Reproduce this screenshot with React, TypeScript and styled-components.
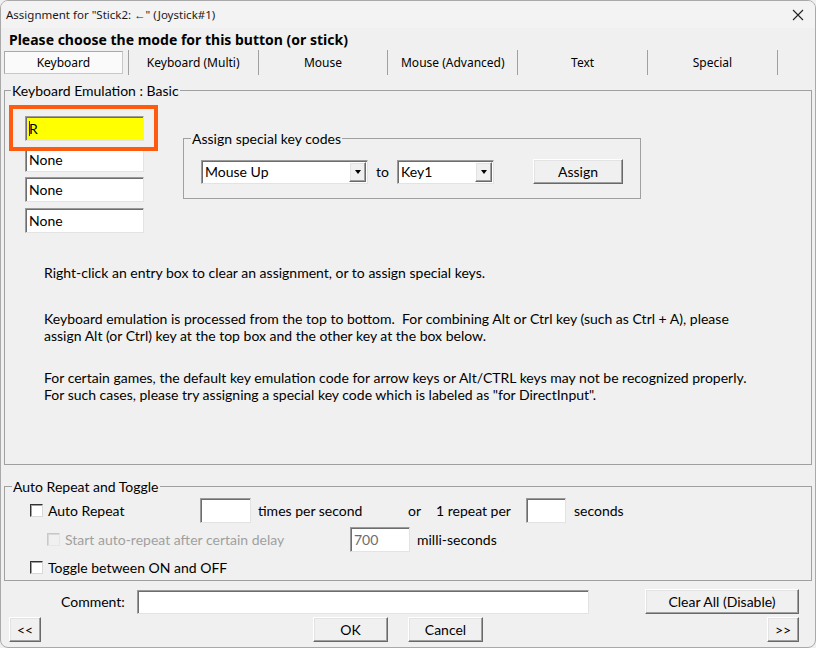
import React from "react";
import styled, { createGlobalStyle, css } from "styled-components";

const GlobalStyle = createGlobalStyle`
  html, body {
    margin: 0;
    padding: 0;
    background: #f0f0f0;
  }
  * {
    box-sizing: border-box;
  }
`;

const UI_FONT = `"Noto Sans", "Open Sans", Arial, sans-serif`;
const DLG_FONT = `Lato, "Liberation Sans", Arial, sans-serif`;

const Window = styled.div`
  width: 816px;
  height: 648px;
  display: flex;
  flex-direction: column;
  background: #f0f0f0;
  border: 1px solid #a9a9a9;
  border-radius: 8px;
  overflow: hidden;
  font-family: ${DLG_FONT};
  color: #000;
`;

const TitleBar = styled.div`
  height: 27px;
  display: flex;
  align-items: center;
  justify-content: space-between;
  padding: 0 8px 0 5px;
  background: #f3f3f3;
  font-family: ${UI_FONT};
  font-size: 11.5px;
  color: #1a1a1a;
`;

const CloseIcon = styled.svg`
  width: 12px;
  height: 12px;
  margin-right: 3px;
`;

const Heading = styled.div`
  height: 22px;
  line-height: 23px;
  padding-left: 8px;
  font-family: ${UI_FONT};
  font-weight: 700;
  font-size: 14px;
  color: #000;
`;

const TabBar = styled.div`
  height: 25px;
  display: flex;
  margin-left: -2px;
`;

const Tab = styled.div`
  width: 129.8px;
  flex: none;
  display: flex;
  border-right: 1px solid #a0a0a0;
`;

const TabFace = styled.div<{ $active?: boolean }>`
  flex: 1;
  display: flex;
  align-items: center;
  justify-content: center;
  margin: ${(p) => (p.$active ? "1px 5px 1px 5px" : "0")};
  font-family: ${UI_FONT};
  font-size: 12px;
  color: #000;
  ${(p) =>
    p.$active &&
    css`
      background: #fafafa;
      border: 1px solid #a8a8a8;
      border-right-color: #c8c8c8;
      border-bottom-color: #c8c8c8;
    `}
`;

const Body = styled.div`
  padding: 0 3px;
  display: flex;
  flex-direction: column;
`;

const Group = styled.fieldset<{ $top: number }>`
  margin: ${(p) => p.$top}px 0 0 0;
  padding: 0;
  border: 1px solid #a0a0a0;
  min-width: 0;
`;

const Legend = styled.legend<{ $left?: number }>`
  margin-left: ${(p) => p.$left ?? 6}px;
  padding: 0 1px;
  font-size: 14px;
  line-height: 15px;
  color: #000;
`;

const EmulationContent = styled.div`
  height: 366px;
  padding: 18px 0 0 20px;
`;

const TopRow = styled.div`
  display: flex;
  align-items: flex-start;
`;

const KeyColumn = styled.div`
  position: relative;
  width: 119px;
  display: flex;
  flex-direction: column;
  gap: 5.5px;
`;

const Highlight = styled.div`
  position: absolute;
  left: -16px;
  top: -11px;
  width: 149px;
  height: 46px;
  border: 4px solid #ff5b0f;
  pointer-events: none;
`;

const sunken = css`
  background: #fff;
  border-top: 1px solid #9a9a9a;
  border-left: 1px solid #9a9a9a;
  border-right: 1px solid #e3e3e3;
  border-bottom: 1px solid #e3e3e3;
  box-shadow: inset 1px 1px 0 #6d6d6d;
`;

const Field = styled.div<{ $w?: number; $h?: number; $bg?: string; $muted?: boolean }>`
  ${sunken}
  width: ${(p) => (p.$w ? `${p.$w}px` : "100%")};
  height: ${(p) => p.$h ?? 25}px;
  flex: none;
  display: flex;
  align-items: center;
  padding-left: 3px;
  font-size: 14px;
  color: ${(p) => (p.$muted ? "#6d6d6d" : "#000")};
  ${(p) => p.$bg && `background: ${p.$bg};`}
`;

const Caret = styled.span`
  display: inline-block;
  width: 1px;
  height: 15px;
  background: #1b1bb0;
  margin-right: -1px;
`;

const SpecialGroup = styled(Group)`
  width: 458px;
  margin-left: 39px;
  flex: none;
`;

const SpecialRow = styled.div`
  display: flex;
  align-items: center;
  padding: 13px 0 14px 17px;
`;

const Select = styled.div<{ $w: number }>`
  ${sunken}
  width: ${(p) => p.$w}px;
  height: 24px;
  flex: none;
  display: flex;
  align-items: stretch;
  font-size: 14px;
`;

const SelectValue = styled.div`
  flex: 1;
  display: flex;
  align-items: center;
  padding-left: 3px;
`;

const raised = css`
  background: #f0f0f0;
  border-top: 1px solid #fff;
  border-left: 1px solid #fff;
  border-right: 1px solid #696969;
  border-bottom: 1px solid #696969;
  box-shadow: inset -1px -1px 0 #a0a0a0, inset 1px 1px 0 #e3e3e3;
`;

const ArrowButton = styled.div`
  ${raised}
  width: 17px;
  margin: 1px 1px 1px 0;
  display: flex;
  align-items: center;
  justify-content: center;
`;

const Arrow = styled.span`
  width: 0;
  height: 0;
  border-left: 3.5px solid transparent;
  border-right: 3.5px solid transparent;
  border-top: 4px solid #000;
`;

const Word = styled.span<{ $ml?: number; $w?: number; $muted?: boolean }>`
  flex: none;
  margin-left: ${(p) => p.$ml ?? 0}px;
  ${(p) => p.$w && `width: ${p.$w}px;`}
  font-size: 14px;
  white-space: nowrap;
  color: ${(p) => (p.$muted ? "#a0a0a0" : "#000")};
`;

const Button = styled.button<{ $w: number; $ml?: number; $h?: number }>`
  ${raised}
  width: ${(p) => p.$w}px;
  height: ${(p) => p.$h ?? 25}px;
  margin-left: ${(p) => p.$ml ?? 0}px;
  flex: none;
  padding: 0;
  font-family: ${DLG_FONT};
  font-size: 14px;
  color: #000;
`;

const Notes = styled.div`
  margin-left: 19px;
  margin-top: 31.5px;
  font-size: 14px;
  line-height: 17.5px;
  color: #000;
`;

const Note = styled.p<{ $mt: number }>`
  margin: ${(p) => p.$mt}px 0 0 0;
`;

const RepeatContent = styled.div`
  height: 86px;
  padding: 4px 0 0 0;
  display: flex;
  flex-direction: column;
`;

const OptionRow = styled.div<{ $indent: number; $h: number; $mt?: number }>`
  display: flex;
  align-items: center;
  height: ${(p) => p.$h}px;
  margin-top: ${(p) => p.$mt ?? 0}px;
  padding-left: ${(p) => p.$indent}px;
`;

const CheckItem = styled.label<{ $w?: number; $disabled?: boolean }>`
  display: flex;
  align-items: center;
  flex: none;
  ${(p) => p.$w && `width: ${p.$w}px;`}
  font-size: 14px;
  color: ${(p) => (p.$disabled ? "#a0a0a0" : "#000")};
`;

const Box = styled.span<{ $disabled?: boolean }>`
  width: 13px;
  height: 13px;
  flex: none;
  margin-right: 5px;
  background: ${(p) => (p.$disabled ? "#f0f0f0" : "#fff")};
  border: 1px solid ${(p) => (p.$disabled ? "#c8c8c8" : "#333")};
  border-right-color: ${(p) => (p.$disabled ? "#e6e6e6" : "#d8d8d8")};
  border-bottom-color: ${(p) => (p.$disabled ? "#e6e6e6" : "#d8d8d8")};
  box-shadow: inset 1px 1px 0 ${(p) => (p.$disabled ? "#d8d8d8" : "#a0a0a0")};
`;

const CommentRow = styled.div`
  display: flex;
  align-items: center;
  height: 27px;
  margin-top: 7px;
  padding-left: 60px;
`;

const NavRow = styled.div`
  display: flex;
  align-items: center;
  height: 25px;
  margin-top: 2px;
  padding-left: 5px;
`;

const tabs = [
  "Keyboard",
  "Keyboard (Multi)",
  "Mouse",
  "Mouse (Advanced)",
  "Text",
  "Special",
];

export default function App() {
  return (
    <>
      <GlobalStyle />
      <Window>
        <TitleBar>
          <span>Assignment for "Stick2: ←" (Joystick#1)</span>
          <CloseIcon viewBox="0 0 12 12">
            <path d="M1 1 L11 11 M11 1 L1 11" stroke="#222" strokeWidth="1.1" />
          </CloseIcon>
        </TitleBar>
        <Heading>Please choose the mode for this button (or stick)</Heading>
        <TabBar>
          {tabs.map((t, i) => (
            <Tab key={t}>
              <TabFace $active={i === 0}>{t}</TabFace>
            </Tab>
          ))}
        </TabBar>
        <Body>
          <Group $top={8}>
            <Legend>Keyboard Emulation : Basic</Legend>
            <EmulationContent>
              <TopRow>
                <KeyColumn>
                  <Field $bg="#ffff00">
                    <Caret />R
                  </Field>
                  <Field>None</Field>
                  <Field>None</Field>
                  <Field>None</Field>
                  <Highlight />
                </KeyColumn>
                <SpecialGroup $top={15}>
                  <Legend $left={7}>Assign special key codes</Legend>
                  <SpecialRow>
                    <Select $w={167}>
                      <SelectValue>Mouse Up</SelectValue>
                      <ArrowButton>
                        <Arrow />
                      </ArrowButton>
                    </Select>
                    <Word $ml={8} $w={21}>
                      to
                    </Word>
                    <Select $w={97}>
                      <SelectValue>Key1</SelectValue>
                      <ArrowButton>
                        <Arrow />
                      </ArrowButton>
                    </Select>
                    <Button $w={90} $ml={39}>
                      Assign
                    </Button>
                  </SpecialRow>
                </SpecialGroup>
              </TopRow>
              <Notes>
                <Note $mt={0}>
                  Right-click an entry box to clear an assignment, or to assign special keys.
                </Note>
                <Note $mt={28}>
                  Keyboard emulation is processed from the top to bottom.&nbsp; For combining Alt
                  or Ctrl key (such as Ctrl + A), please
                  <br />
                  assign Alt (or Ctrl) key at the top box and the other key at the box below.
                </Note>
                <Note $mt={24}>
                  For certain games, the default key emulation code for arrow keys or Alt/CTRL
                  keys may not be recognized properly.
                  <br />
                  For such cases, please try assigning a special key code which is labeled as
                  "for DirectInput".
                </Note>
              </Notes>
            </EmulationContent>
          </Group>

          <Group $top={14}>
            <Legend $left={7}>Auto Repeat and Toggle</Legend>
            <RepeatContent>
              <OptionRow $indent={25} $h={25}>
                <CheckItem $w={170}>
                  <Box />
                  Auto Repeat
                </CheckItem>
                <Field $w={51} />
                <Word $ml={7} $w={150}>
                  times per second
                </Word>
                <Word $w={28}>or</Word>
                <Word $w={90}>1 repeat per</Word>
                <Field $w={40} />
                <Word $ml={8}>seconds</Word>
              </OptionRow>
              <OptionRow $indent={42} $h={25} $mt={4}>
                <CheckItem $w={303} $disabled>
                  <Box $disabled />
                  Start auto-repeat after certain delay
                </CheckItem>
                <Field $w={60} $muted>
                  700
                </Field>
                <Word $ml={7}>milli-seconds</Word>
              </OptionRow>
              <OptionRow $indent={25} $h={18} $mt={6}>
                <CheckItem>
                  <Box />
                  Toggle between ON and OFF
                </CheckItem>
              </OptionRow>
            </RepeatContent>
          </Group>
        </Body>

        <CommentRow>
          <Word $w={76}>Comment:</Word>
          <Field $w={452} $h={24} />
          <Button $w={154} $ml={56}>
            Clear All (Disable)
          </Button>
        </CommentRow>
        <NavRow>
          <Button $w={32} $ml={3}>
            &lt;&lt;
          </Button>
          <Button $w={75} $ml={272}>
            OK
          </Button>
          <Button $w={75} $ml={20}>
            Cancel
          </Button>
          <Button $w={32} $ml={284}>
            &gt;&gt;
          </Button>
        </NavRow>
      </Window>
    </>
  );
}
